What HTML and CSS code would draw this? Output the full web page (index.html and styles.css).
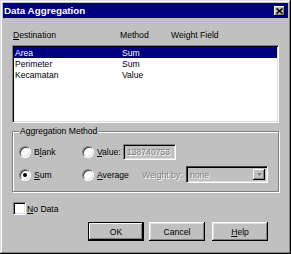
FILE: index.html
```html
<!doctype html>
<html lang="en">
<head>
	<meta charset="UTF-8">
	<title>Data Aggregation</title>
	<link rel="stylesheet" href="styles.css">
</head>
<body>
	<div class="dialog">
		<div class="titlebar">
			<span>Data Aggregation</span>
			<span class="close">
				<svg width="7" height="6" viewBox="0 0 7 6"><path d="M0.5 0.5 L6.5 5.5 M6.5 0.5 L0.5 5.5" stroke="#000" stroke-width="1.6"/></svg>
			</span>
		</div>

		<div class="content">
			<div class="cols head">
				<span class="c1"><u>D</u>estination</span>
				<span class="c2">Method</span>
				<span>Weight Field</span>
			</div>

			<div class="list">
				<div class="cols row selected"><span class="c1">Area</span><span class="c2">Sum</span></div>
				<div class="cols row"><span class="c1">Perimeter</span><span class="c2">Sum</span></div>
				<div class="cols row"><span class="c1">Kecamatan</span><span class="c2">Value</span></div>
			</div>

			<div class="group">
				<span class="group-label">Aggregation Method</span>
				<div class="opt-row">
					<label class="opt first"><span class="radio"></span><span>B<u>l</u>ank</span></label>
					<label class="opt value"><span class="radio"></span><span><u>V</u>alue:</span></label>
					<span class="textbox disabled">138740753</span>
				</div>
				<div class="opt-row">
					<label class="opt first"><span class="radio on"></span><span><u>S</u>um</span></label>
					<label class="opt average"><span class="radio"></span><span><u>A</u>verage</span></label>
					<span class="weight disabled">Weight by:</span>
					<span class="combo">
						<span class="combo-text disabled">none</span>
						<span class="combo-btn">
							<svg width="5" height="3" viewBox="0 0 5 3"><path d="M0 0 H5 L2.5 3 Z" fill="#808080"/></svg>
						</span>
					</span>
				</div>
			</div>

			<label class="check-row"><span class="checkbox"></span><span><u>N</u>o Data</span></label>

			<div class="buttons">
				<button class="btn default">OK</button>
				<button class="btn">Cancel</button>
				<button class="btn"><u>H</u>elp</button>
			</div>
		</div>
	</div>
</body>
</html>
```

FILE: styles.css
```css
html, body {margin: 0; background: #c0c0c0;}
body {font-family: "Liberation Sans", Arial, sans-serif; font-size: 8.6px; color: #000;}

.dialog {
	width: 291px; height: 254px;
	box-sizing: border-box;
	padding: 3px;
	background: #c0c0c0;
	box-shadow: inset -1px -1px #000, inset 1px 1px #dfdfdf, inset -2px -2px #808080, inset 2px 2px #fff;
}

.titlebar {
	height: 15px;
	display: flex; align-items: center; justify-content: space-between;
	padding: 0 3px 0 1px;
	background: #000080;
	color: #fff; font-weight: bold; font-size: 9.8px;
}
.close {
	width: 11px; height: 10px;
	display: flex; align-items: center; justify-content: center;
	background: #c0c0c0;
	box-shadow: inset -1px -1px #000, inset 1px 1px #fff, inset -2px -2px #808080;
}
.close svg {display: block;}

.content {padding: 0 9px;}

.cols {display: flex; align-items: center;}
.cols .c1 {width: 107px;}
.cols .c2 {width: 51px;}
.head {margin-top: 11px; height: 11px; padding-left: 1px;}

.list {
	margin-top: 5px;
	height: 78px;
	box-sizing: border-box;
	border: 1px solid; border-color: #808080 #fff #fff #808080;
	box-shadow: inset 1px 1px #000, inset -1px -1px #dfdfdf;
	background: #fff;
	padding: 1px;
}
.row {height: 11px; padding-left: 1px;}
.row.selected {background: #000080; color: #fff;}

.group {
	position: relative;
	margin-top: 8px;
	height: 61px;
	box-sizing: border-box;
	border: 1px solid #808080;
	box-shadow: inset 1px 1px #fff, 1px 1px #fff;
	padding: 11px 0 0 6px;
}
.group-label {
	position: absolute;
	left: 6px; top: -6px;
	padding: 0 1px;
	line-height: 11px;
	background: #c0c0c0;
}
.opt-row {display: flex; align-items: center; height: 17px;}
.opt-row + .opt-row {margin-top: 6px;}
.opt {display: flex; align-items: center; gap: 3px;}
.opt.first {width: 63px;}
.opt.value {width: 41px;}
.opt.average {width: 60px;}

.radio {
	position: relative;
	width: 12px; height: 12px;
	box-sizing: border-box;
	border-radius: 50%;
	border: 1px solid; border-color: #808080 #fff #fff #808080;
	box-shadow: inset 1px 1px #404040, inset -1px -1px #dfdfdf;
	background: #fff;
}
.radio.on::after {
	content: "";
	position: absolute;
	left: 3px; top: 3px;
	width: 4px; height: 4px;
	border-radius: 50%;
	background: #000;
}

.disabled {color: #808080; text-shadow: 1px 1px #fff;}

.textbox {
	width: 53px; height: 16px;
	box-sizing: border-box;
	display: flex; align-items: center;
	padding-left: 3px;
	border: 1px solid; border-color: #808080 #fff #fff #808080;
	box-shadow: inset 1px 1px #000, inset -1px -1px #dfdfdf;
}
.weight {width: 44px;}
.combo {
	width: 82px; height: 17px;
	box-sizing: border-box;
	display: flex; align-items: center; justify-content: space-between;
	padding: 2px;
	border: 1px solid; border-color: #404040 #fff #fff #404040;
	box-shadow: inset 1px 1px #000, inset -1px -1px #dfdfdf;
}
.combo-text {padding-left: 1px;}
.combo-btn {
	width: 12px; height: 11px;
	display: flex; align-items: center; justify-content: center;
	box-shadow: inset -1px -1px #000, inset 1px 1px #fff, inset -2px -2px #808080;
}
.combo-btn svg {display: block;}

.check-row {
	display: flex; align-items: center; gap: 1px;
	margin: 10px 0 0 1px;
	height: 13px;
}
.checkbox {
	width: 13px; height: 13px;
	box-sizing: border-box;
	border: 1px solid; border-color: #808080 #fff #fff #808080;
	box-shadow: inset 1px 1px #000, inset -1px -1px #dfdfdf;
	background: #fff;
}

.buttons {display: flex; gap: 5px; margin: 7px 0 0 76px;}
.btn {
	width: 56px; height: 19px;
	margin: 0; padding: 0;
	border: 0;
	font: inherit; color: #000;
	background: #c0c0c0;
	box-shadow: inset -1px -1px #000, inset 1px 1px #fff, inset -2px -2px #808080, inset 2px 2px #dfdfdf;
}
.btn + .btn + .btn {margin-left: 2px;}
.btn.default {
	border: 1px solid #000;
	box-shadow: inset -1px -1px #000, inset 1px 1px #fff, inset -2px -2px #808080;
}
```
